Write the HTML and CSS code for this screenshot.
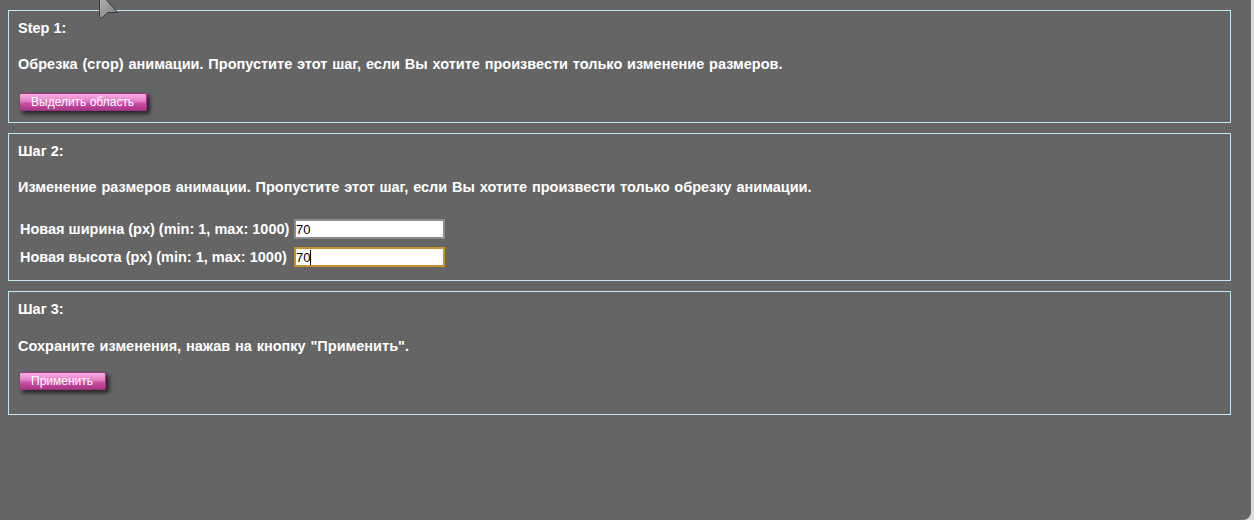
FILE: index.html
```html
<!DOCTYPE html>
<html lang="ru">
<head>
<meta charset="utf-8">
<title>Resize</title>
<link rel="stylesheet" href="styles.css">
</head>
<body>
<div class="page">
  <section class="step step-1">
    <div class="title">Step 1:</div>
    <p class="desc">Обрезка (crop) анимации. Пропустите этот шаг, если Вы хотите произвести только изменение размеров.</p>
    <button class="btn" type="button">Выделить область</button>
  </section>
  <section class="step step-2">
    <div class="title">Шаг 2:</div>
    <p class="desc">Изменение размеров анимации. Пропустите этот шаг, если Вы хотите произвести только обрезку анимации.</p>
    <div class="fields">
      <label class="label" for="w">Новая ширина (px) (min: 1, max: 1000)</label>
      <input class="field" id="w" type="text" value="70">
      <label class="label" for="h">Новая высота (px) (min: 1, max: 1000)</label>
      <div class="field-wrap">
        <input class="field focused" id="h" type="text" value="70">
        <span class="caret"></span>
      </div>
    </div>
  </section>
  <section class="step step-3">
    <div class="title">Шаг 3:</div>
    <p class="desc">Сохраните изменения, нажав на кнопку "Применить".</p>
    <button class="btn" type="button">Применить</button>
  </section>
  <svg class="cursor" width="26" height="22" viewBox="0 0 26 22">
    <defs>
      <linearGradient id="cg" x1="0" y1="0" x2="1" y2="1">
        <stop offset="0" stop-color="#b8b8b8"/>
        <stop offset="1" stop-color="#7a7a7a"/>
      </linearGradient>
    </defs>
    <polygon points="2.5,-8 2.5,16.5 4,18.5 11,12.5 20.5,12.5" fill="url(#cg)" stroke="#3a3a3a" stroke-width="1"/>
  </svg>
</div>
</body>
</html>
```
FILE: styles.css
```css
html, body {
  margin: 0;
  padding: 0;
  background: #dcdcdc;
}
.page {
  position: relative;
  width: 1251px;
  height: 520px;
  box-sizing: border-box;
  padding: 10px 0 0 8px;
  background: #656565;
  border-bottom-right-radius: 8px;
  overflow: hidden;
  font: bold 14.5px/17px "Liberation Sans", Arial, sans-serif;
  color: #ffffff;
}
.step {
  width: 1223px;
  box-sizing: border-box;
  border: 1px solid #c2e8f6;
  margin: 0 0 10px 0;
  padding: 9px 9px 11px 9px;
}
.title {
  margin: 0;
}
.desc {
  margin: 19px 0 0 0;
  word-spacing: 0.8px;
}
.btn {
  display: block;
  height: 18px;
  margin: 20px 0 0 1px;
  padding: 0 12px 0 11px;
  font: 12px/16px "Liberation Sans", Arial, sans-serif;
  color: #ffffff;
  background: linear-gradient(#f9b0e2 0%, #e67cc8 45%, #c94ca4 60%, #a93888 100%);
  border: 1px solid #9e3582;
  border-radius: 2px;
  box-shadow: 3px 3px 4px rgba(0, 0, 0, 0.65);
  cursor: pointer;
}
.step-2 {
  padding-bottom: 13px;
}
.step-3 .desc {
  margin-top: 20px;
}
.step-3 .btn {
  margin-top: 17px;
}
.step-3 {
  padding-bottom: 24px;
}
.fields {
  display: grid;
  grid-template-columns: 274px 151px;
  grid-auto-rows: 20px;
  row-gap: 8px;
  align-items: center;
  margin: 23px 0 0 2px;
}
.label {
  white-space: nowrap;
}
.field-wrap {
  position: relative;
  height: 20px;
}
.field {
  display: block;
  width: 151px;
  height: 20px;
  box-sizing: border-box;
  margin: 0;
  padding: 0;
  border: 2px solid #8d8d8d;
  background: #ffffff;
  font: 13px/16px "Liberation Sans", Arial, sans-serif;
  color: #000000;
  outline: none;
}
.field.focused {
  border-color: #c4912f;
}
.caret {
  position: absolute;
  left: 16px;
  top: 3px;
  width: 1px;
  height: 15px;
  background: #000000;
}
.cursor {
  position: absolute;
  left: 97px;
  top: 0;
}
```
